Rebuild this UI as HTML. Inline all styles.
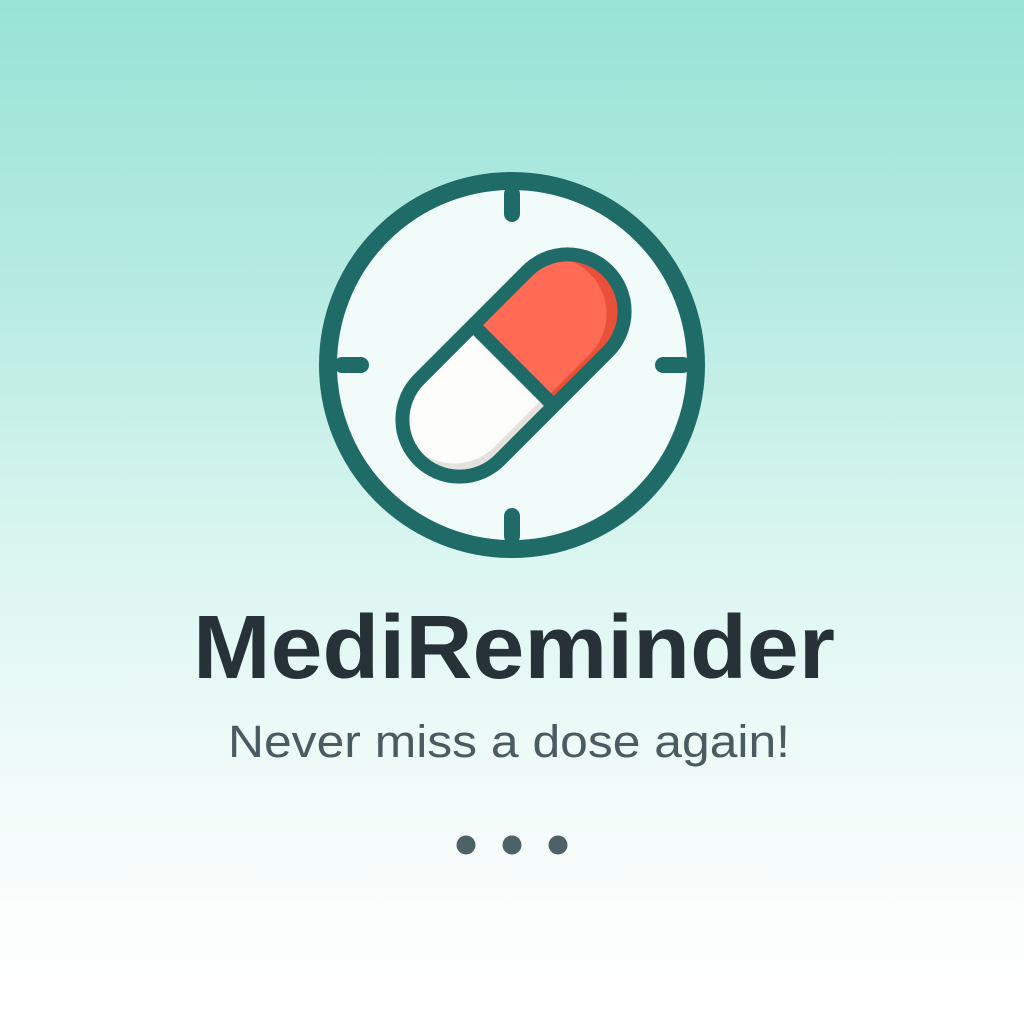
<!DOCTYPE html>
<html><head><meta charset="utf-8"><style>
html,body{margin:0;padding:0}
body{width:1024px;height:1024px;overflow:hidden;background:linear-gradient(180deg,#98e3d6 0%,#b9ece3 30%,#dcf6f1 55%,#f0fbf9 75%,#fbfefd 90%,#ffffff 100%)}
svg{display:block}
</style></head><body>
<svg width="1024" height="1024" viewBox="0 0 1024 1024">
<circle cx="512" cy="365" r="184" fill="#f1fbfa" stroke="#1f6b68" stroke-width="18"/>
<g stroke="#1f6b68" stroke-width="16" stroke-linecap="round">
<line x1="512" y1="194" x2="512" y2="214"/>
<line x1="512" y1="516" x2="512" y2="536"/>
<line x1="342" y1="365" x2="361" y2="365"/>
<line x1="663" y1="365" x2="683" y2="365"/>
</g>
<g transform="translate(513.5,365.5) rotate(-45)">
<defs>
<clipPath id="pc"><rect x="-133.5" y="-57" width="267" height="114" rx="57"/></clipPath>
<clipPath id="cl"><rect x="-140" y="-70" width="140" height="140"/></clipPath>
<clipPath id="cr"><rect x="0" y="-70" width="140" height="140"/></clipPath>
</defs>
<g clip-path="url(#pc)">
<rect x="-140" y="-60" width="140" height="120" fill="#e4e2de"/>
<rect x="0" y="-60" width="140" height="120" fill="#e8503a"/>
<g clip-path="url(#cl)"><rect x="-128" y="-70" width="267" height="114" rx="57" fill="#fdfdfb"/></g>
<g clip-path="url(#cr)"><rect x="-148" y="-68" width="267" height="114" rx="57" fill="#ff6b55"/></g>
</g>
<rect x="-133.5" y="-57" width="267" height="114" rx="57" fill="none" stroke="#1f6b68" stroke-width="14"/>
<line x1="0" y1="-57" x2="0" y2="57" stroke="#1f6b68" stroke-width="14"/>
</g>
<text x="514" y="678" text-anchor="middle" font-family="Liberation Sans, sans-serif" font-weight="bold" font-size="90" fill="#263238" textLength="642" lengthAdjust="spacingAndGlyphs">MediReminder</text>
<text x="509" y="757" text-anchor="middle" font-family="Liberation Sans, sans-serif" font-size="45" fill="#4a5c62" textLength="562" lengthAdjust="spacingAndGlyphs">Never miss a dose again!</text>
<g fill="#4d6266">
<circle cx="466" cy="845" r="9.5"/>
<circle cx="512" cy="845" r="9.5"/>
<circle cx="558" cy="845" r="9.5"/>
</g>
</svg>
</body></html>
